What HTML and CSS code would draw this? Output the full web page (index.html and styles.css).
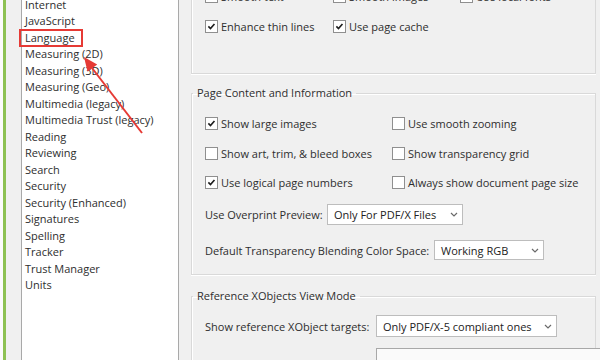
FILE: index.html
```html
<!DOCTYPE html>
<html lang="en">
<head>
    <meta charset="UTF-8">
    <title>Preferences - Page Display</title>
    <link rel="stylesheet" href="styles.css">
</head>
<body>
    <div class="window">
        <div class="accent"></div>

        <div class="sidebar">
            <ul class="categories">
                <li>Internet</li>
                <li>JavaScript</li>
                <li>Language</li>
                <li>Measuring (2D)</li>
                <li>Measuring (3D)</li>
                <li>Measuring (Geo)</li>
                <li>Multimedia (legacy)</li>
                <li>Multimedia Trust (legacy)</li>
                <li>Reading</li>
                <li>Reviewing</li>
                <li>Search</li>
                <li>Security</li>
                <li>Security (Enhanced)</li>
                <li>Signatures</li>
                <li>Spelling</li>
                <li>Tracker</li>
                <li>Trust Manager</li>
                <li>Units</li>
            </ul>
        </div>

        <div class="main">
            <div class="group group-cut">
                <div class="options three-col">
                    <label class="option"><span class="check"></span>Smooth text</label>
                    <label class="option"><span class="check"></span>Smooth images</label>
                    <label class="option"><span class="check"></span>Use local fonts</label>
                    <label class="option"><span class="check checked"><svg viewBox="0 0 13 13"><path d="M2.8 6.4 L5.3 9 L10 3.6"/></svg></span>Enhance thin lines</label>
                    <label class="option"><span class="check checked"><svg viewBox="0 0 13 13"><path d="M2.8 6.4 L5.3 9 L10 3.6"/></svg></span>Use page cache</label>
                </div>
            </div>

            <fieldset class="group page-content">
                <legend>Page Content and Information</legend>
                <div class="options two-col">
                    <label class="option"><span class="check checked"><svg viewBox="0 0 13 13"><path d="M2.8 6.4 L5.3 9 L10 3.6"/></svg></span>Show large images</label>
                    <label class="option"><span class="check"></span>Use smooth zooming</label>
                    <label class="option"><span class="check"></span>Show art, trim, &amp; bleed boxes</label>
                    <label class="option"><span class="check"></span>Show transparency grid</label>
                    <label class="option"><span class="check checked"><svg viewBox="0 0 13 13"><path d="M2.8 6.4 L5.3 9 L10 3.6"/></svg></span>Use logical page numbers</label>
                    <label class="option"><span class="check"></span>Always show document page size</label>
                </div>
                <div class="field overprint">
                    <span class="field-label label-overprint">Use Overprint Preview:</span>
                    <div class="select select-overprint">
                        <span>Only For PDF/X Files</span>
                        <svg class="chevron" viewBox="0 0 8 5"><path d="M1 1 L4 4 L7 1"/></svg>
                    </div>
                </div>
                <div class="field blending">
                    <span class="field-label label-blending">Default Transparency Blending Color Space:</span>
                    <div class="select select-blending">
                        <span>Working RGB</span>
                        <svg class="chevron" viewBox="0 0 8 5"><path d="M1 1 L4 4 L7 1"/></svg>
                    </div>
                </div>
            </fieldset>

            <fieldset class="group xobjects">
                <legend>Reference XObjects View Mode</legend>
                <div class="field targets">
                    <span class="field-label label-targets">Show reference XObject targets:</span>
                    <div class="select select-targets">
                        <span>Only PDF/X-5 compliant ones</span>
                        <svg class="chevron" viewBox="0 0 8 5"><path d="M1 1 L4 4 L7 1"/></svg>
                    </div>
                </div>
                <div class="field location">
                    <span class="field-label label-targets"></span>
                    <div class="textbox"></div>
                </div>
            </fieldset>
        </div>

        <!-- annotation drawn over the screenshot -->
        <div class="highlight"></div>
        <svg class="arrow" viewBox="0 0 600 360">
            <line x1="142" y1="133" x2="92" y2="68"/>
            <polygon points="84,57 97.2,64.6 87.6,71.8"/>
        </svg>
    </div>
</body>
</html>
```

FILE: styles.css
```css
body {
    margin: 0;
    background-color: #ffffff;
    font-family: 'Open Sans', 'Liberation Sans', sans-serif;
    font-size: 11px;
    color: #2e2e2e;
}
.window {
    position: relative;
    display: flex;
    height: 360px;
    overflow: hidden;
    background-color: #f0f0f0;
    border-left: 3px solid #fbfbfb;
}
.accent {
    width: 3px;
    background-color: #8dc153;
}
.sidebar {
    display: flex;
    padding: 0 12px 0 15px;
}
.categories {
    width: 158px;
    margin: 0;
    padding: 0 0 0 3px;
    list-style: none;
    background-color: #ffffff;
    border-left: 1px solid #a9a9a9;
    border-right: 1px solid #a9a9a9;
    box-sizing: border-box;
}
.categories li {
    line-height: 16.5px;
    white-space: nowrap;
}
.categories li:first-child {
    margin-top: -3.25px;
}
.main {
    flex: 1;
    padding-right: 4px;
    min-width: 0;
}
.group {
    border: 1px solid #d9d9d9;
    box-shadow: inset 1px 1px 0 #ffffff, 0 1px 0 #ffffff;
}
.group-cut {
    border-top: none;
    margin-top: -19px;
    padding: 0 0 32px 13px;
}
fieldset.group {
    margin: 0;
    min-width: 0;
    padding: 0 0 0 13px;
}
fieldset.group legend {
    margin-left: -12px;
    padding: 0 4px;
    line-height: 16px;
    color: #2e2e2e;
}
.page-content {
    margin-top: 11px !important;
    padding-bottom: 14px !important;
}
.xobjects {
    margin-top: 13px !important;
    padding-bottom: 20px !important;
}
.options {
    display: grid;
}
.three-col {
    grid-template-columns: 128px 127px auto;
    grid-auto-rows: 30px;
}
.two-col {
    grid-template-columns: 187px auto;
    grid-auto-rows: 29.5px;
    margin-top: 8px;
}
.option {
    display: flex;
    align-items: center;
    white-space: nowrap;
}
.check {
    width: 13px;
    height: 13px;
    margin-right: 3px;
    box-sizing: border-box;
    border: 1px solid #8f8f8f;
    background-color: #ffffff;
    flex-shrink: 0;
}
.check svg {
    display: block;
    width: 11px;
    height: 11px;
}
.check path {
    fill: none;
    stroke: #1c1c1c;
    stroke-width: 1.9;
}
.field {
    display: flex;
    align-items: center;
    white-space: nowrap;
}
.overprint {
    margin-top: 6.5px;
}
.blending {
    margin-top: 15px;
}
.targets {
    margin-top: 11px;
}
.location {
    margin-top: 11px;
}
.field-label {
    flex-shrink: 0;
}
.label-overprint {
    width: 122px;
}
.label-blending {
    width: 229px;
}
.label-targets {
    width: 171px;
}
.select {
    display: flex;
    align-items: center;
    justify-content: space-between;
    box-sizing: border-box;
    height: 21px;
    padding: 0 4px 0 6px;
    background-color: #ffffff;
    border: 1px solid #bdbdbd;
    color: #222222;
}
.select-overprint {
    width: 136px;
}
.select-blending {
    width: 110px;
    height: 20px;
}
.select-targets {
    width: 181px;
    height: 22px;
}
.chevron {
    width: 8px;
    height: 5px;
}
.chevron path {
    fill: none;
    stroke: #6a6a6a;
    stroke-width: 1.2;
}
.textbox {
    width: 230px;
    height: 22px;
    background-color: #fafafa;
    border: 1px solid #a8a8a8;
    flex-shrink: 0;
}
.highlight {
    position: absolute;
    left: 16px;
    top: 29px;
    width: 64px;
    height: 18px;
    box-sizing: border-box;
    border: 2px solid #e63a35;
}
.arrow {
    position: absolute;
    left: -3px;
    top: 0;
    width: 600px;
    height: 360px;
    pointer-events: none;
}
.arrow line {
    stroke: #e63a35;
    stroke-width: 2;
}
.arrow polygon {
    fill: #e63a35;
}
```
